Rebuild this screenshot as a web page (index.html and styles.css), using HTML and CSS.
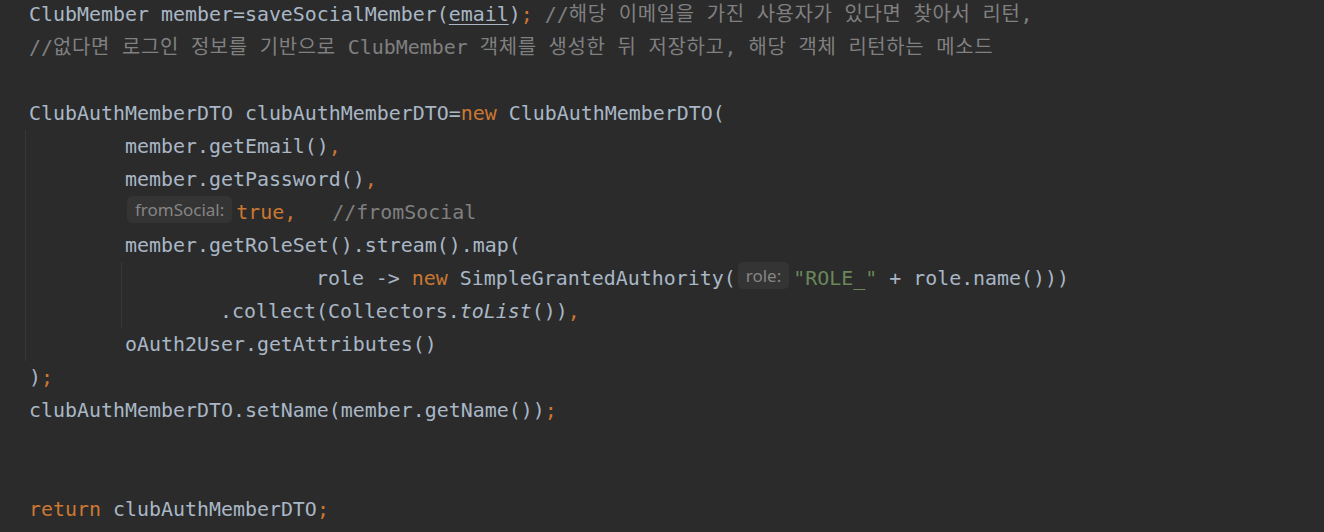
FILE: index.html
```html
<!DOCTYPE html>
<html>
<head>
    <title>OAuth2 UserDetailsService</title>
    <meta charset="UTF-8">
    <link rel="stylesheet" href="styles.css">
</head>
<body>
    <div class="editor">
        <div class="line">ClubMember member=saveSocialMember(<span class="param">email</span>)<span class="kw">;</span> <span class="cm">//<span class="hg">해당</span> <span class="hg">이메일을</span> <span class="hg">가진</span> <span class="hg">사용자가</span> <span class="hg">있다면</span> <span class="hg">찾아서</span> <span class="hg">리턴</span>,</span></div>
        <div class="line"><span class="cm">//<span class="hg">없다면</span> <span class="hg">로그인</span> <span class="hg">정보를</span> <span class="hg">기반으로</span> ClubMember <span class="hg">객체를</span> <span class="hg">생성한</span> <span class="hg">뒤</span> <span class="hg">저장하고</span>, <span class="hg">해당</span> <span class="hg">객체</span> <span class="hg">리턴하는</span> <span class="hg">메소드</span></span></div>
        <div class="line"></div>
        <div class="line">ClubAuthMemberDTO clubAuthMemberDTO=<span class="kw">new</span> ClubAuthMemberDTO(</div>
        <div class="guide">
            <div class="line">        member.getEmail()<span class="kw">,</span></div>
            <div class="line">        member.getPassword()<span class="kw">,</span></div>
            <div class="line">        <span class="hint">fromSocial:</span><span class="kw">true,</span>   <span class="cm">//fromSocial</span></div>
            <div class="line">        member.getRoleSet().stream().map(</div>
            <div class="guide inner">
                <div class="line">                role -&gt; <span class="kw">new</span> SimpleGrantedAuthority(<span class="hint">role:</span><span class="str">"ROLE_"</span> + role.name()))</div>
                <div class="line">        .collect(Collectors.<span class="static">toList</span>())<span class="kw">,</span></div>
            </div>
            <div class="line">        oAuth2User.getAttributes()</div>
        </div>
        <div class="line">)<span class="kw">;</span></div>
        <div class="line">clubAuthMemberDTO.setName(member.getName())<span class="kw">;</span></div>
        <div class="line"></div>
        <div class="line"></div>
        <div class="line"><span class="kw">return</span> clubAuthMemberDTO<span class="kw">;</span></div>
    </div>
</body>
</html>
```

FILE: styles.css
```css
body {
    margin: 0;
    background-color: #2b2b2b;
    height: 532px;
    overflow: hidden;
}
.editor {
    margin-top: -2px;
    padding-left: 29px;
    font-family: "DejaVu Sans Mono", "Noto Sans CJK KR", monospace;
    font-size: 19.93px;
    color: #a9b7c6;
}
.line {
    height: 33px;
    line-height: 33px;
    white-space: pre;
}
.guide {
    margin-left: -4px;
    padding-left: 3px;
    border-left: 1px solid #393939;
}
.guide.inner {
    margin-left: 92px;
    padding-left: 2px;
}
.kw {
    color: #cc7832;
}
.cm {
    color: #808080;
}
/* hangul falls back to the CJK font, a little narrower than the IDE's */
.hg {
    letter-spacing: 0.65px;
}
.str {
    color: #6a8759;
}
.static {
    font-style: italic;
}
.param {
    text-decoration: underline;
    text-underline-offset: 3px;
}
.hint {
    display: inline-block;
    height: 27px;
    line-height: 27px;
    padding: 0 8px;
    margin: 0 4px 0 2px;
    border-radius: 5px;
    background-color: #343434;
    color: #858585;
    font-family: "Noto Sans", sans-serif;
    font-size: 17px;
    vertical-align: 3px;
}
```
